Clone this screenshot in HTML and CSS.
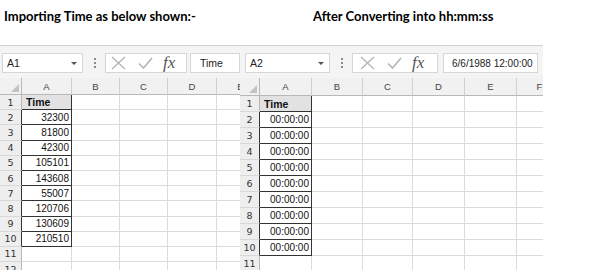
FILE: index.html
```html
<!DOCTYPE html>
<html lang="en">
<head>
    <meta charset="UTF-8">
    <title>Time conversion</title>
    <link rel="stylesheet" href="styles.css">
</head>
<body>

<div class="titles">
    <h2 class="title-left">Importing Time as below shown:-</h2>
    <h2 class="title-right">After Converting into hh:mm:ss</h2>
</div>

<div class="sheets">

    <!-- before -->
    <div class="sheet sheet-left">
        <div class="toolbar">
            <div class="namebox">A1<span class="drop"></span></div>
            <div class="dots"><i></i><i></i><i></i></div>
            <div class="fnbox">
                <svg class="ico-x" width="15" height="14" viewBox="0 0 15 14"><path d="M1 1L14 13M14 1L1 13" stroke="#b4b4b4" stroke-width="1.3" fill="none"/></svg>
                <svg class="ico-ok" width="15" height="12" viewBox="0 0 15 12"><path d="M1 6.5L5.5 11L14 1" stroke="#b4b4b4" stroke-width="1.6" fill="none"/></svg>
                <span class="fx">fx</span>
            </div>
            <div class="formula">Time</div>
        </div>
        <table class="grid">
            <colgroup><col class="w-rh"><col class="w-a"><col class="w-b"><col class="w-c"><col class="w-d"><col class="w-e"></colgroup>
            <tr class="head"><th class="corner"><span></span></th><th>A</th><th>B</th><th>C</th><th>D</th><th>E</th></tr>
            <tr><td class="rh">1</td><td class="a1">Time</td><td></td><td></td><td></td><td></td></tr>
            <tr><td class="rh edge">2</td><td class="box">32300</td><td></td><td></td><td></td><td></td></tr>
            <tr><td class="rh edge">3</td><td class="box">81800</td><td></td><td></td><td></td><td></td></tr>
            <tr><td class="rh edge">4</td><td class="box">42300</td><td></td><td></td><td></td><td></td></tr>
            <tr><td class="rh edge">5</td><td class="box">105101</td><td></td><td></td><td></td><td></td></tr>
            <tr><td class="rh edge">6</td><td class="box">143608</td><td></td><td></td><td></td><td></td></tr>
            <tr><td class="rh edge">7</td><td class="box">55007</td><td></td><td></td><td></td><td></td></tr>
            <tr><td class="rh edge">8</td><td class="box">120706</td><td></td><td></td><td></td><td></td></tr>
            <tr><td class="rh edge">9</td><td class="box">130609</td><td></td><td></td><td></td><td></td></tr>
            <tr><td class="rh edge">10</td><td class="box">210510</td><td></td><td></td><td></td><td></td></tr>
            <tr><td class="rh">11</td><td></td><td></td><td></td><td></td><td></td></tr>
            <tr><td class="rh">12</td><td></td><td></td><td></td><td></td><td></td></tr>
        </table>
    </div>

    <!-- after -->
    <div class="sheet sheet-right">
        <div class="toolbar">
            <div class="namebox">A2<span class="drop"></span></div>
            <div class="dots"><i></i><i></i><i></i></div>
            <div class="fnbox">
                <svg class="ico-x" width="15" height="14" viewBox="0 0 15 14"><path d="M1 1L14 13M14 1L1 13" stroke="#b4b4b4" stroke-width="1.3" fill="none"/></svg>
                <svg class="ico-ok" width="15" height="12" viewBox="0 0 15 12"><path d="M1 6.5L5.5 11L14 1" stroke="#b4b4b4" stroke-width="1.6" fill="none"/></svg>
                <span class="fx">fx</span>
            </div>
            <div class="formula">6/6/1988 12:00:00</div>
        </div>
        <table class="grid">
            <colgroup><col class="w-rh"><col class="w-a"><col class="w-b"><col class="w-c"><col class="w-d"><col class="w-e"><col class="w-f"></colgroup>
            <tr class="head"><th class="corner"><span></span></th><th>A</th><th>B</th><th>C</th><th>D</th><th>E</th><th>F</th></tr>
            <tr><td class="rh">1</td><td class="a1">Time</td><td></td><td></td><td></td><td></td><td></td></tr>
            <tr><td class="rh edge">2</td><td class="box">00:00:00</td><td></td><td></td><td></td><td></td><td></td></tr>
            <tr><td class="rh edge">3</td><td class="box">00:00:00</td><td></td><td></td><td></td><td></td><td></td></tr>
            <tr><td class="rh edge">4</td><td class="box">00:00:00</td><td></td><td></td><td></td><td></td><td></td></tr>
            <tr><td class="rh edge">5</td><td class="box">00:00:00</td><td></td><td></td><td></td><td></td><td></td></tr>
            <tr><td class="rh edge">6</td><td class="box">00:00:00</td><td></td><td></td><td></td><td></td><td></td></tr>
            <tr><td class="rh edge">7</td><td class="box">00:00:00</td><td></td><td></td><td></td><td></td><td></td></tr>
            <tr><td class="rh edge">8</td><td class="box">00:00:00</td><td></td><td></td><td></td><td></td><td></td></tr>
            <tr><td class="rh edge">9</td><td class="box">00:00:00</td><td></td><td></td><td></td><td></td><td></td></tr>
            <tr><td class="rh edge">10</td><td class="box">00:00:00</td><td></td><td></td><td></td><td></td><td></td></tr>
            <tr><td class="rh">11</td><td></td><td></td><td></td><td></td><td></td><td></td></tr>
        </table>
    </div>

</div>

</body>
</html>
```

FILE: styles.css
```css
body {
    margin: 0;
    background: #fff;
    font-family: "Liberation Sans", Arial, sans-serif;
    color: #000;
}

/* titles above the two screenshots */
.titles {
    display: flex;
    height: 45px;
}
.titles h2 {
    margin: 0;
    padding-top: 8px;
    font-family: Lato, "Liberation Sans", sans-serif;
    font-size: 13px;
    font-weight: bold;
    white-space: nowrap;
}
.title-left {
    width: 309px;
    padding-left: 4px;
}

.sheets {
    display: flex;
    align-items: flex-start;
}
.sheet {
    height: 225px;
    overflow: hidden;
    flex: none;
}
.sheet-left {
    width: 240px;
}
.sheet-right {
    width: 303px;
}

/* formula bar */
.toolbar {
    display: flex;
    align-items: center;
    height: 33px;
    box-sizing: border-box;
    padding-top: 2px;
    border-top: 1px solid #d2d2d2;
    background: #f4f4f4;
}
.sheet-left .toolbar {
    padding-left: 2px;
}
.sheet-right .toolbar {
    padding-left: 5px;
}
.namebox,
.fnbox,
.formula {
    height: 20px;
    box-sizing: border-box;
    background: #fff;
    border: 1px solid #d6d6d6;
    display: flex;
    align-items: center;
    font-size: 10.5px;
    color: #222;
    white-space: nowrap;
}
.namebox {
    position: relative;
    padding-left: 4px;
}
.sheet-left .namebox {
    width: 81px;
}
.sheet-right .namebox {
    width: 85px;
}
.drop {
    position: absolute;
    right: 5px;
    top: 8px;
    border-left: 3px solid transparent;
    border-right: 3px solid transparent;
    border-top: 3px solid #555;
}
.dots {
    display: flex;
    flex-direction: column;
    gap: 2px;
    margin: 0 9px 0 11px;
}
.dots i {
    width: 2px;
    height: 2px;
    background: #8a8a8a;
}
.fnbox {
    width: 82px;
    padding-left: 5px;
    gap: 12px;
}
.sheet-right .fnbox {
    width: 86px;
    padding-left: 7px;
}
.fx {
    font-family: "Liberation Serif", serif;
    font-style: italic;
    font-size: 17px;
    color: #555;
    margin-left: -2px;
}
.formula {
    margin-left: 3px;
    padding-left: 9px;
    flex: 1;
}
.sheet-right .formula {
    margin-left: 5px;
    margin-right: 5px;
    padding-left: 8px;
    font-size: 10px;
}

/* the grid */
.grid {
    border-collapse: separate;
    border-spacing: 0;
    table-layout: fixed;
    font-size: 10px;
}
.sheet-left .grid {
    width: 265px;
}
.sheet-right .grid {
    width: 323px;
}
.sheet-left .w-rh { width: 22px; }
.sheet-left .w-a { width: 50px; }
.sheet-left .w-b,
.sheet-left .w-c { width: 48px; }
.sheet-left .w-d { width: 49px; }
.sheet-left .w-e { width: 48px; }

.sheet-right .w-rh { width: 20px; }
.sheet-right .w-a,
.sheet-right .w-d,
.sheet-right .w-e { width: 52px; }
.sheet-right .w-b { width: 51px; }
.sheet-right .w-c { width: 50px; }
.sheet-right .w-f { width: 46px; }

.grid th {
    height: 17px;
    box-sizing: border-box;
    padding: 0;
    background: #f1f1f1;
    border-right: 1px solid #d0d0d0;
    border-bottom: 1px solid #b8b8b8;
    font-weight: normal;
    font-size: 9.5px;
    color: #444;
}
.sheet-right .grid th {
    height: 18px;
}
.grid th.corner {
    position: relative;
    border-right-color: #b8b8b8;
}
.corner span {
    position: absolute;
    right: 2px;
    bottom: 2px;
    border-left: 8px solid transparent;
    border-bottom: 8px solid #c3c3c3;
}
.grid td {
    padding: 0 2px 0 0;
    box-sizing: border-box;
    border-right: 1px solid #dcdcdc;
    border-bottom: 1px solid #dcdcdc;
    text-align: right;
    white-space: nowrap;
    overflow: hidden;
    color: #111;
}
.sheet-left .grid td {
    height: 15.2px;
}
.sheet-right .grid td {
    height: 16px;
}
.grid td.rh {
    background: #eeeeee;
    border-right-color: #b8b8b8;
    border-bottom-color: #d8d8d8;
    text-align: center;
    padding: 0;
    color: #333;
    font-family: "DejaVu Sans", sans-serif;
    font-size: 9.5px;
}
.grid td.rh.edge {
    border-right-color: #333;
}
.grid td.a1 {
    background: #e2e2e2;
    text-align: left;
    padding-left: 4px;
    font-weight: bold;
    font-size: 10.5px;
    border-right-color: #333;
    border-bottom-color: #333;
}
.grid td.box {
    border-right-color: #333;
    border-bottom-color: #333;
}
```
